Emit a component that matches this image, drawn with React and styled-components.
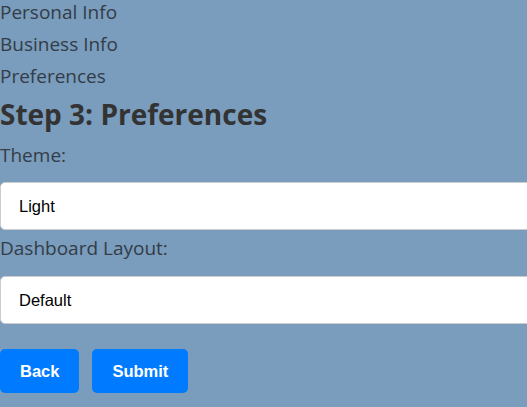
import React from 'react'
import styled, { createGlobalStyle } from 'styled-components'

const Global = createGlobalStyle`
  html, body {
    margin: 0;
    padding: 0;
    background: #7a9cbd;
    overflow: hidden;
  }
  body {
    font-family: "Open Sans", "Noto Sans", sans-serif;
    color: #333;
  }
`

const Wizard = styled.div`
  display: flex;
  flex-direction: column;
  width: 527px;
`

const Steps = styled.ul`
  list-style: none;
  margin: 0;
  padding: 0;
  display: flex;
  flex-direction: column;
  gap: 8px;
`

const StepItem = styled.li`
  font-size: 19px;
  line-height: 24px;
  color: #333c47;
`

const Heading = styled.h2`
  margin: 9px 0 0;
  font-size: 28px;
  line-height: 34px;
  font-weight: 700;
  color: #333;
`

const Label = styled.label`
  display: block;
  margin-top: ${({ $top }) => $top}px;
  font-size: 19px;
  line-height: 22px;
  color: #333c47;
`

const Select = styled.select`
  appearance: none;
  display: block;
  box-sizing: border-box;
  width: 560px;
  height: 48px;
  margin-top: ${({ $top }) => $top}px;
  padding: 0 18px;
  font-family: "Liberation Sans", Arial, sans-serif;
  font-size: 16.5px;
  color: #000;
  background: #fff;
  border: 1px solid #ccc;
  border-radius: 5px;
`

const Actions = styled.div`
  display: flex;
  gap: 13px;
  margin-top: 25px;
`

const Button = styled.button`
  height: 44px;
  padding: 0 20px;
  border: none;
  border-radius: 5px;
  background: #007bff;
  color: #fff;
  font-family: "Liberation Sans", Arial, sans-serif;
  font-size: 16.5px;
  font-weight: 700;
  cursor: pointer;
`

const App = () => {
  return (
    <Wizard>
      <Global />
      <Steps>
        <StepItem>Personal Info</StepItem>
        <StepItem>Business Info</StepItem>
        <StepItem>Preferences</StepItem>
      </Steps>
      <Heading>Step 3: Preferences</Heading>
      <Label $top={13}>Theme:</Label>
      <Select $top={16} defaultValue="light">
        <option value="light">Light</option>
        <option value="dark">Dark</option>
      </Select>
      <Label $top={7}>Dashboard Layout:</Label>
      <Select $top={17} defaultValue="default">
        <option value="default">Default</option>
        <option value="compact">Compact</option>
      </Select>
      <Actions>
        <Button>Back</Button>
        <Button>Submit</Button>
      </Actions>
    </Wizard>
  )
}

export default App
